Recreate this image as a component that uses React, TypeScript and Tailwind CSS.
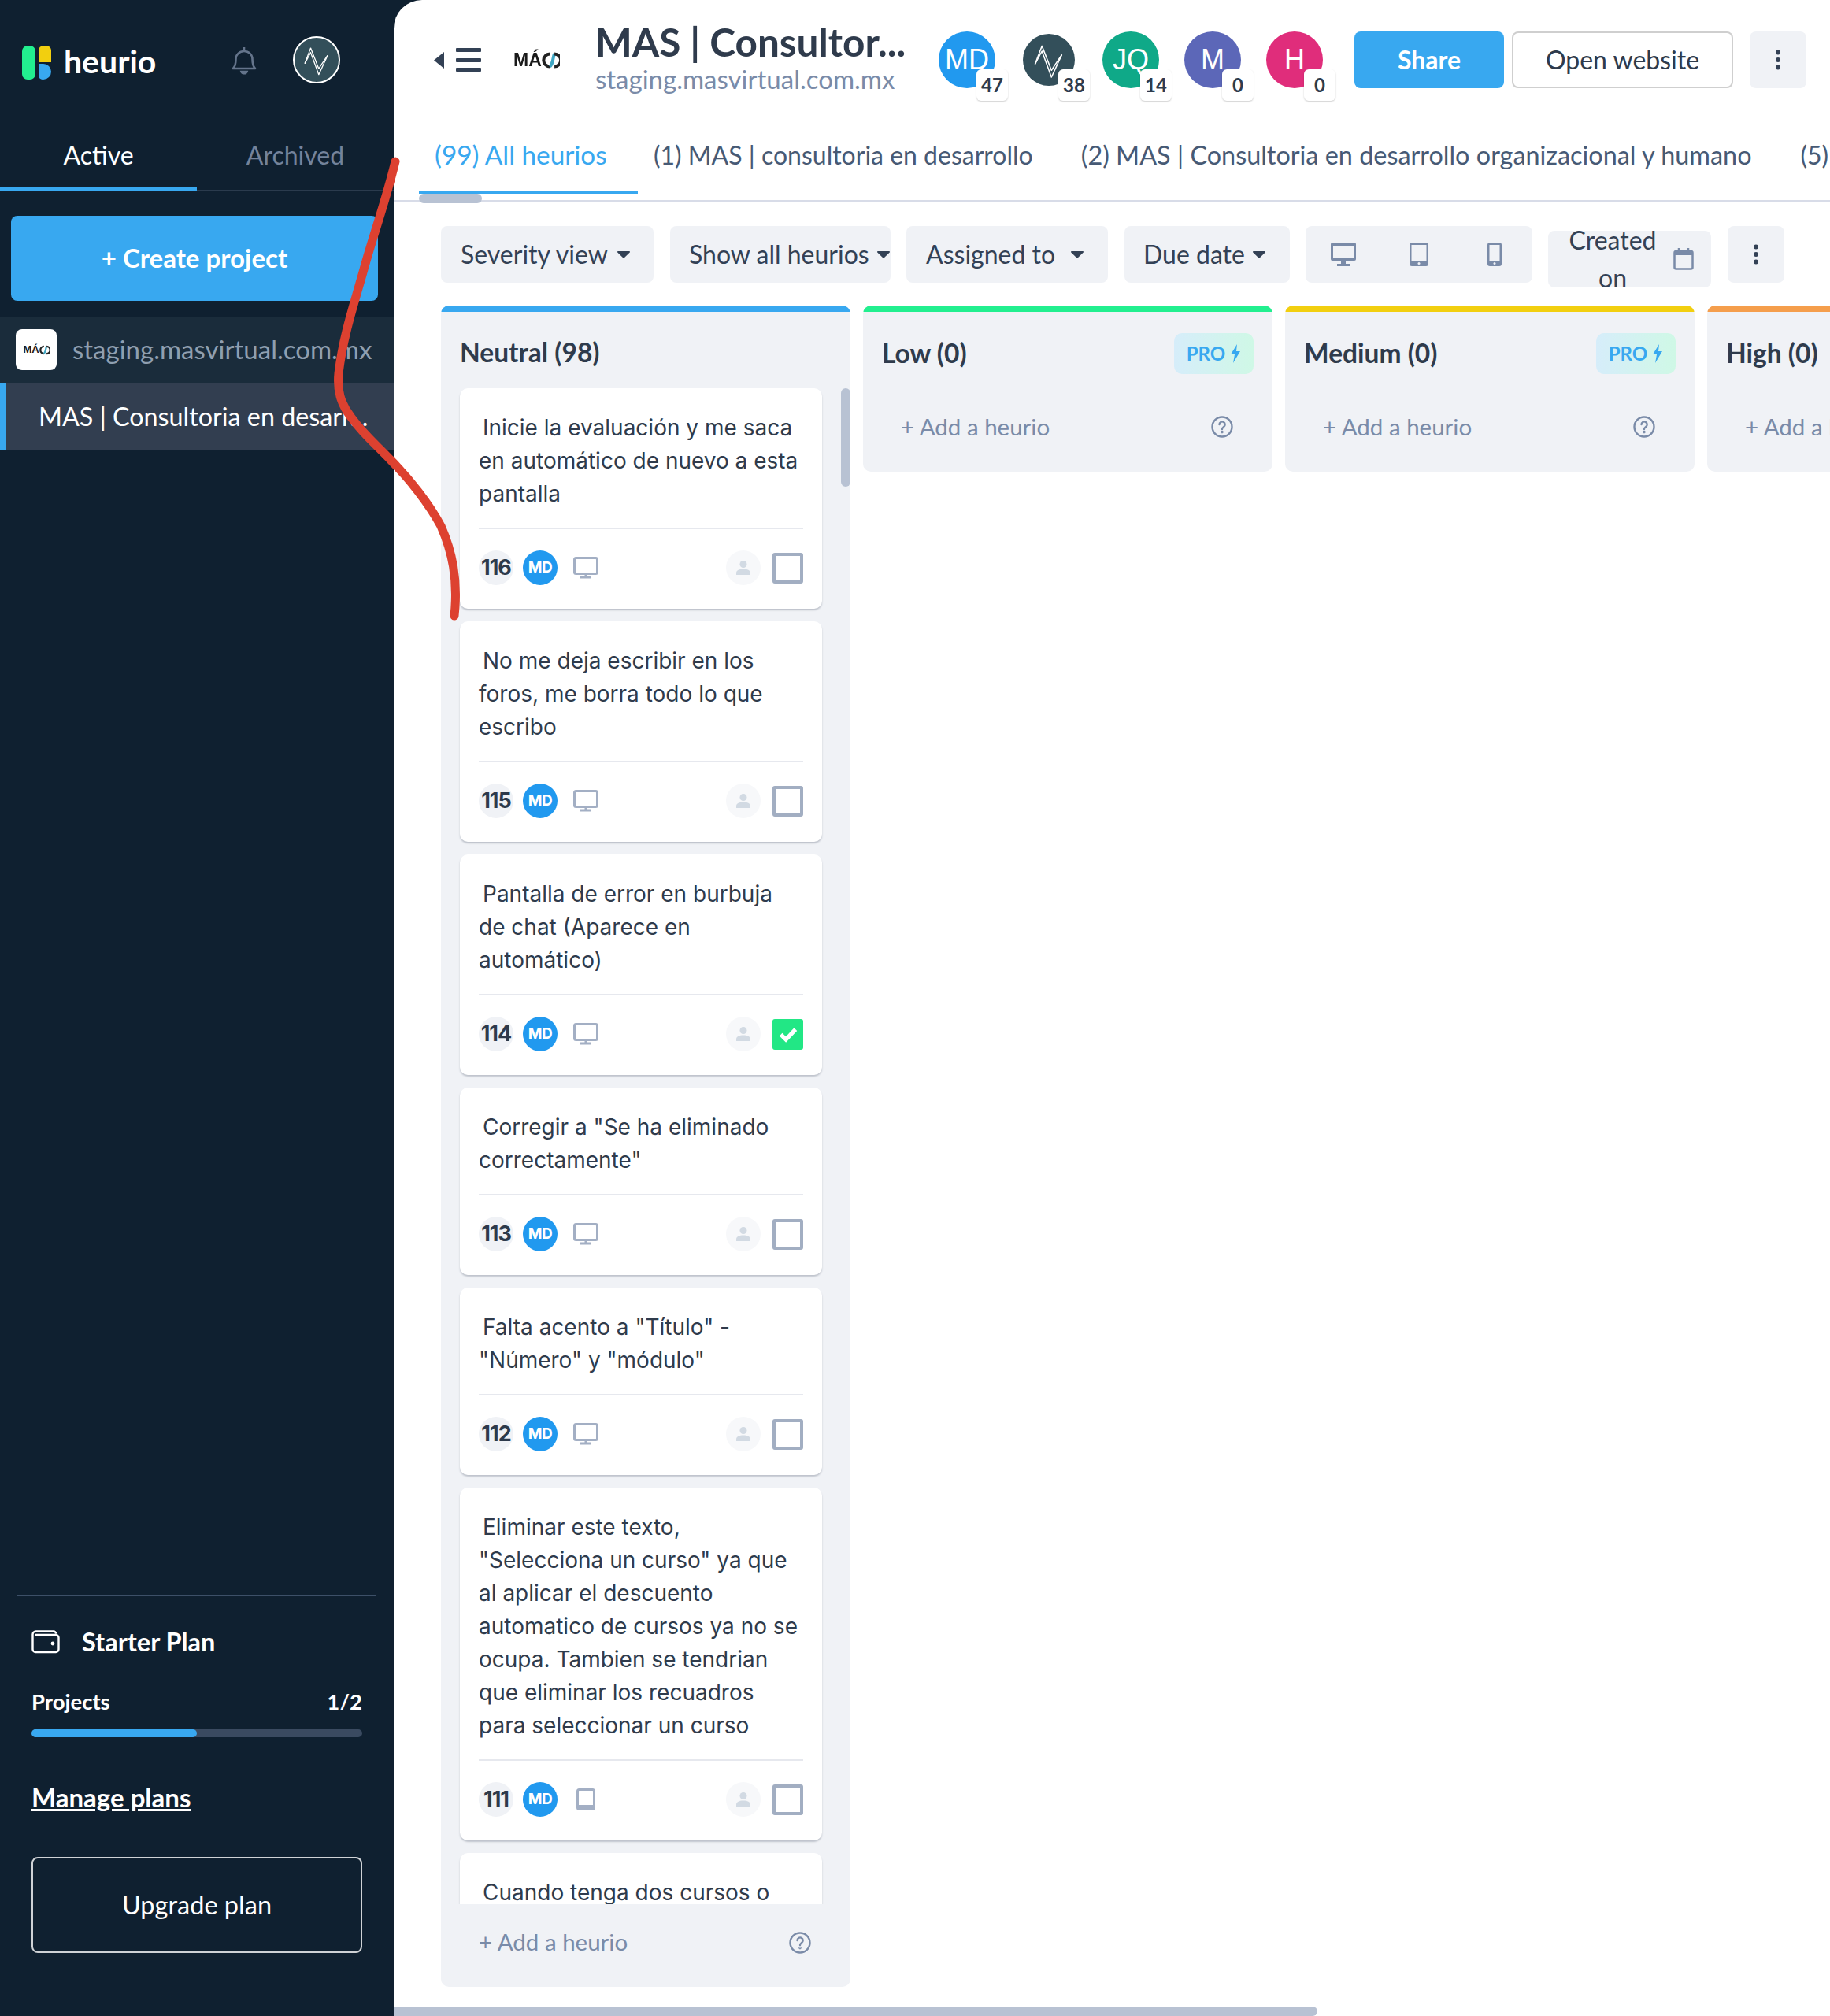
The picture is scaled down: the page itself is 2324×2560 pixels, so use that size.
import { ReactNode } from 'react';

const cards = [
  { id: 116, text: 'Inicie la evaluación y me saca en automático de nuevo a esta pantalla', device: 'desktop', done: false },
  { id: 115, text: 'No me deja escribir en los foros, me borra todo lo que escribo', device: 'desktop', done: false },
  { id: 114, text: 'Pantalla de error en burbuja de chat (Aparece en automático)', device: 'desktop', done: true },
  { id: 113, text: 'Corregir a "Se ha eliminado correctamente"', device: 'desktop', done: false },
  { id: 112, text: 'Falta acento a "Título" - "Número" y "módulo"', device: 'desktop', done: false },
  { id: 111, text: 'Eliminar este texto, "Selecciona un curso" ya que al aplicar el descuento automatico de cursos ya no se ocupa. Tambien se tendrian que eliminar los recuadros para seleccionar un curso', device: 'tablet', done: false },
  { id: 110, text: 'Cuando tenga dos cursos o', device: 'desktop', done: false },
];

const people = [
  { label: 'MD', bg: 'bg-[#2199ef]', count: 47 },
  { label: 'pulse', bg: 'bg-[#334f5a]', count: 38 },
  { label: 'JQ', bg: 'bg-[#0fa988]', count: 14 },
  { label: 'M', bg: 'bg-[#5c67b8]', count: 0 },
  { label: 'H', bg: 'bg-[#e02d7b]', count: 0 },
];

const Pulse = ({ className }: { className: string }) => (
  <svg viewBox="0 0 60 60" className={className} fill="none" stroke="white" strokeWidth="1.4" strokeLinejoin="round">
    <path d="M14 35 L22 14 L33 42 L45 24" />
    <path d="M14 35 L22 20 L33 50 L45 24" />
  </svg>
);

const MasLogo = ({ className }: { className: string }) => (
  <div className={`flex items-center font-['Liberation_Sans',sans-serif] font-bold text-[#1a1a1a] ${className}`}>
    <span>MÁ</span>
    <svg viewBox="0 0 20 20" className="h-[1em] w-[1em]" fill="none" strokeWidth="3.5">
      <path d="M9 3 A7 7 0 0 0 9 17" stroke="#222" />
      <path d="M9 17 C13 13 12 7 14 3" stroke="#3fa7c4" />
      <path d="M14 3 A7 7 0 0 1 14 17" stroke="#222" />
    </svg>
  </div>
);

const Caret = () => (
  <svg viewBox="0 0 16 10" className="h-[10px] w-[16px] shrink-0" fill="#334155"><path d="M1 1h14a1 1 0 0 1 .8 1.5L8.8 9.2a1 1 0 0 1-1.6 0L.2 2.5A1 1 0 0 1 1 1z" /></svg>
);

const Dots = () => (
  <svg viewBox="0 0 8 30" className="h-[26px] w-[8px]" fill="#334155"><circle cx="4" cy="4" r="3.4" /><circle cx="4" cy="15" r="3.4" /><circle cx="4" cy="26" r="3.4" /></svg>
);

const Help = () => (
  <svg viewBox="0 0 28 28" className="h-[28px] w-[28px]" fill="none" stroke="#7a8ba8" strokeWidth="2.4" strokeLinecap="round">
    <circle cx="14" cy="14" r="12.5" />
    <path d="M10.5 11a3.6 3.6 0 1 1 5.6 3c-1.3.9-2.1 1.5-2.1 3" />
    <circle cx="14" cy="20.6" r="0.6" />
  </svg>
);

const DesktopOutline = () => (
  <svg viewBox="0 0 32 28" className="h-[28px] w-[32px]" fill="none" stroke="#a3afc4" strokeWidth="3">
    <rect x="1.5" y="1.5" width="29" height="20" rx="2" />
    <path d="M16 22v4M9 26h14" />
  </svg>
);

const TabletOutline = () => (
  <svg viewBox="0 0 24 28" className="h-[28px] w-[24px]" fill="none" stroke="#a3afc4" strokeWidth="3">
    <rect x="1.5" y="1.5" width="21" height="25" rx="2" />
    <path d="M2 23h20" strokeWidth="4" />
  </svg>
);

const Card = ({ id, text, device, done }: { id: number; text: string; device: string; done: boolean }) => (
  <div className="shrink-0 rounded-[10px] bg-white px-[24px] pt-[29px] pb-[30px] shadow-[0_2px_2px_rgba(80,90,110,0.3)]">
    <p className="font-['Inter',sans-serif] text-[28px] leading-[42px] text-[#2f3b4c]"><span className="inline-block w-[5px]" />{text}</p>
    <div className="mt-[22px] mb-[27px] h-[2px] bg-[#e6e8ee]" />
    <div className="flex items-center">
      <div className="flex h-[44px] w-[44px] items-center justify-center rounded-full bg-[#f0f2f6] font-['Inter',sans-serif] text-[27px] font-bold tracking-[-1px] text-[#2d3a4b]">{id}</div>
      <div className="ml-[12px] flex h-[44px] w-[44px] items-center justify-center rounded-full bg-[#2199ef] font-['Inter',sans-serif] text-[19px] font-bold tracking-[-0.5px] text-white">MD</div>
      <div className="ml-[20px] flex w-[32px] items-center justify-center">{device === 'desktop' ? <DesktopOutline /> : <TabletOutline />}</div>
      <div className="ml-auto flex h-[44px] w-[44px] items-center justify-center rounded-full bg-[#f7f8fa]">
        <svg viewBox="0 0 20 20" className="h-[20px] w-[20px]" fill="#d2dae3"><circle cx="10" cy="5.5" r="4.5" /><path d="M1 19v-2.5C1 13 5 11.5 10 11.5s9 1.500 9 5V19z" /></svg>
      </div>
      {done ? (
        <div className="ml-[15px] flex h-[39px] w-[39px] items-center justify-center rounded-[3px] bg-[#22e785]">
          <svg viewBox="0 0 24 24" className="h-[28px] w-[28px]" fill="none" stroke="white" strokeWidth="4.5"><path d="M4 12.500l5.500 5.500L20 7" /></svg>
        </div>
      ) : (
        <div className="ml-[15px] h-[39px] w-[39px] rounded-[3px] border-[4px] border-[#a2aec2] bg-white" />
      )}
    </div>
  </div>
);

const ToolbarPill = ({ children, className }: { children: ReactNode; className: string }) => (
  <div className={`flex h-[72px] items-center rounded-[8px] bg-[#f0f2f6] text-[#334155] ${className}`}>{children}</div>
);

const ProBadge = () => (
  <div className="flex h-[52px] w-[101px] items-center justify-center gap-[6px] rounded-[10px] bg-gradient-to-r from-[#d6edfa] to-[#cff8e6] text-[24px] font-bold text-[#38a8f0]">
    PRO
    <svg viewBox="0 0 14 24" className="h-[24px] w-[14px]" fill="#38a8f0"><path d="M9 0 1 13h5l-2 11 9-15H8z" /></svg>
  </div>
);

const SideColumn = ({ title, bar, pro }: { title: string; bar: string; pro: boolean }) => (
  <div className="h-[211px] w-[520px] shrink-0 overflow-hidden rounded-[10px] bg-[#f0f2f6]">
    <div className={`h-[8px] ${bar}`} />
    <div className="flex h-[106px] items-center justify-between pr-[24px] pl-[24px]">
      <span className="-mt-[2px] text-[33.500px] font-bold text-[#2f3b4c]">{title}</span>
      {pro && <ProBadge />}
    </div>
    <div className="flex h-[80px] items-center justify-between pr-[50px] pl-[48px]">
      <span className="text-[29.500px] whitespace-nowrap text-[#7a8ba8]">+ Add a heurio</span>
      <Help />
    </div>
  </div>
);

export default function App() {
  return (
    <div className="relative flex h-[2560px] w-[2324px] overflow-hidden bg-[#0f2030] font-['Lato',sans-serif]">
      {/* sidebar */}
      <aside className="flex h-full w-[500px] shrink-0 flex-col text-white">
        <div className="flex h-[152px] items-start pt-[46px]">
          <svg viewBox="0 0 38 43" className="mt-[12px] ml-[28px] h-[43px] w-[38px]">
            <rect x="0" y="0" width="17" height="43" rx="7" fill="#22ef8f" />
            <path d="M21 6a6 6 0 0 1 6-6h4a6 6 0 0 1 6 6v15H21z" fill="#f2cf0f" />
            <path d="M21 23h6a10 10 0 0 1 0 20h-1a5 5 0 0 1-5-5z" fill="#38a8f0" />
          </svg>
          <span className="mt-[6px] ml-[15px] text-[41px] leading-[52px] font-bold">heurio</span>
          <svg viewBox="0 0 32 36" className="mt-[13px] ml-[96px] h-[36px] w-[32px]" fill="none" stroke="#64748b" strokeWidth="2.600">
            <path d="M2 28h28c-3-3-3.500-6-3.500-12 0-5.500-4.500-10-10.500-10S5.500 10.500 5.500 16c0 6-.5 9-3.500 12z" strokeLinejoin="round" />
            <path d="M16 6V1" />
            <path d="M12.500 32c1 3 6 3 7 0z" fill="#64748b" />
          </svg>
          <div className="ml-[46px] flex h-[60px] w-[60px] items-center justify-center rounded-full border-[2px] border-white bg-[#334f5a]">
            <Pulse className="h-[56px] w-[56px]" />
          </div>
        </div>
        <div className="flex h-[91px] border-b-[2px] border-[#2b3b4d] text-[32px]">
          <div className="flex h-[90px] w-1/2 items-center justify-center border-b-[4px] border-[#38a8f0] pt-[4px]">Active</div>
          <div className="flex h-[90px] w-1/2 items-center justify-center text-[#74839b]">Archived</div>
        </div>
        <div className="mt-[31px] ml-[14px] flex h-[108px] w-[466px] items-center justify-center rounded-[8px] bg-[#38a8f0] text-[33px] font-bold">+ Create project</div>
        <div className="mt-[20px] flex h-[84px] items-center bg-[#1a2c3b] pl-[20px]">
          <div className="flex h-[52px] w-[52px] items-center justify-center rounded-[8px] bg-white">
            <MasLogo className="text-[13px]" />
          </div>
          <span className="ml-[20px] text-[33px] whitespace-nowrap text-[#8f9fb0]">staging.masvirtual.com.mx</span>
        </div>
        <div className="flex h-[86px] items-center border-l-[8px] border-[#38a8f0] bg-[#323e50] pl-[41px] text-[32.300px] whitespace-nowrap">MAS | Consultoria en desarr...</div>

        <div className="mt-auto px-[22px]">
          <div className="h-[2px] bg-[#3d5068]" />
        </div>
        <div className="flex flex-col px-[40px] pt-[34px]">
          <div className="flex items-center">
            <svg viewBox="0 0 36 30" className="h-[30px] w-[36px]" fill="none" stroke="white" strokeWidth="2.400">
              <path d="M5 6h26a3.500 3.500 0 0 1 3.500 3.500v15A3.500 3.500 0 0 1 31 28H5a3.500 3.500 0 0 1-3.500-3.500v-19A4 4 0 0 1 5.500 1.500H28a3 3 0 0 1 3 3" />
              <circle cx="27" cy="17" r="1.200" fill="white" />
            </svg>
            <span className="ml-[28px] text-[32.500px] font-bold">Starter Plan</span>
          </div>
          <div className="mt-[30px] flex items-center justify-between text-[27.500px] font-bold">
            <span>Projects</span>
            <span>1/2</span>
          </div>
          <div className="mt-[15px] h-[10px] shrink-0 rounded-full bg-[#3a4a60]">
            <div className="h-full w-1/2 rounded-full bg-[#38a8f0]" />
          </div>
        </div>
        <div className="mt-[56px] px-[40px] text-[33px] leading-[40px] font-bold underline">Manage plans</div>
        <div className="mx-[40px] mt-[56px] mb-[80px] flex h-[122px] items-center justify-center rounded-[8px] border-[2px] border-[#cfd2d6] text-[32.500px]">Upgrade plan</div>
      </aside>

      {/* main */}
      <main className="relative flex h-full min-w-0 flex-1 flex-col overflow-hidden rounded-tl-[36px] bg-white">
        <header className="flex h-[152px] shrink-0 items-start pt-[40px] pl-[51px]">
          <div className="flex h-[72px] items-center">
            <svg viewBox="0 0 13 21" className="h-[21px] w-[13px]" fill="#334155"><path d="M13 0v21L0 10.500z" /></svg>
            <div className="ml-[15px] flex h-[30px] w-[32px] flex-col justify-between">
              <div className="h-[5px] rounded-[1px] bg-[#334155]" />
              <div className="h-[5px] rounded-[1px] bg-[#334155]" />
              <div className="h-[5px] rounded-[1px] bg-[#334155]" />
            </div>
            <MasLogo className="ml-[41px] w-[63px] text-[23px] blur-[0.5px]" />
          </div>
          <div className="ml-[41px] -mt-[16px] w-[400px]">
            <div className="text-[49.500px] leading-[58px] font-bold whitespace-nowrap text-[#2f3b4c]">MAS | Consultor...</div>
            <div className="mt-[-4px] text-[33px] leading-[44px] whitespace-nowrap text-[#7a8ba8]">staging.masvirtual.com.mx</div>
          </div>
          <div className="ml-[36px] flex gap-[32px]">
            {people.map(p => (
              <div key={p.label} className="relative flex h-[72px] w-[72px] items-center justify-center">
                <div className={`flex items-center justify-center rounded-full font-['Liberation_Sans',sans-serif] text-[36px] text-white ${p.bg} ${p.label === 'pulse' ? 'h-[66px] w-[66px]' : 'h-[72px] w-[72px]'}`}>
                  {p.label === 'pulse' ? <Pulse className="h-[66px] w-[66px]" /> : p.label}
                </div>
                <div className="absolute top-[48px] left-[48px] flex h-[40px] w-[40px] items-center justify-center rounded-[6px] bg-white text-[24px] font-bold text-[#2f3b4c] shadow-[0_1px_2px_rgba(0,0,0,0.2)]">{p.count}</div>
              </div>
            ))}
          </div>
          <div className="ml-[40px] flex h-[72px] w-[190px] items-center justify-center rounded-[8px] bg-[#38a8f0] text-[32px] font-bold text-white">Share</div>
          <div className="ml-[10px] flex h-[72px] w-[281px] items-center justify-center rounded-[8px] border-[2px] border-[#cfcfcf] text-[32px] text-[#2f3b4c]">Open website</div>
          <div className="ml-[21px] flex h-[72px] w-[72px] items-center justify-center rounded-[8px] bg-[#f0f2f6]"><Dots /></div>
        </header>

        <div className="relative flex h-[104px] shrink-0 border-b-[2px] border-[#d8dce8] pl-[32px] text-[32px] whitespace-nowrap text-[#475a75]">
          <div className="flex h-[94px] w-[278px] shrink-0 items-center border-b-[4px] border-[#38a8f0] pl-[20px] text-[33.300px] text-[#38a8f0]">(99) All heurios</div>
          <div className="ml-[20px] flex h-[90px] shrink-0 items-center">(1) MAS | consultoria en desarrollo</div>
          <div className="ml-[61px] flex h-[90px] shrink-0 items-center text-[32.400px]">(2) MAS | Consultoria en desarrollo organizacional y humano</div>
          <div className="ml-[62px] flex h-[90px] shrink-0 items-center">(5) MAS | Consultoria</div>
          <div className="absolute top-[94px] left-[32px] h-[12px] w-[80px] rounded-full bg-[#b8c2d3]" />
        </div>

        <div className="flex shrink-0 items-start pt-[31px] pl-[60px] text-[32px] whitespace-nowrap">
          <ToolbarPill className="w-[270px] gap-[12px] pl-[25px]">Severity view <Caret /></ToolbarPill>
          <ToolbarPill className="ml-[21px] w-[280px] gap-[10px] pl-[24px]">Show all heurios <Caret /></ToolbarPill>
          <ToolbarPill className="ml-[20px] w-[256px] gap-[20px] pl-[25px]">Assigned to <Caret /></ToolbarPill>
          <ToolbarPill className="ml-[21px] w-[210px] gap-[10px] pl-[24px]">Due date <Caret /></ToolbarPill>
          <ToolbarPill className="ml-[20px] grid w-[288px] grid-cols-3 justify-items-center">
            <svg viewBox="0 0 32 30" className="h-[30px] w-[32px]"><rect x="0" y="0" width="32" height="23" rx="2" fill="#7a8ba8" /><rect x="3" y="5" width="26" height="15" fill="#f0f2f6" /><path d="M13 23h6v4h5v3H8v-3h5z" fill="#7a8ba8" /></svg>
            <svg viewBox="0 0 24 30" className="h-[30px] w-[24px]"><rect x="0" y="0" width="24" height="30" rx="3" fill="#7a8ba8" /><rect x="2.500" y="3" width="19" height="20" fill="#f0f2f6" /><circle cx="12" cy="26.500" r="1.500" fill="#f0f2f6" /></svg>
            <svg viewBox="0 0 18 30" className="h-[30px] w-[18px]"><rect x="0" y="0" width="18" height="30" rx="3" fill="#7a8ba8" /><rect x="2.500" y="3" width="13" height="20" fill="#f0f2f6" /><circle cx="9" cy="26.500" r="1.500" fill="#f0f2f6" /></svg>
          </ToolbarPill>
          <div className="mt-[6px] ml-[20px] flex h-[72px] w-[207px] items-center justify-between rounded-[8px] bg-[#f0f2f6] pr-[22px] pl-[24px] text-[#334155]">
            <div className="w-[116px] text-center leading-[48px] whitespace-normal">Created on</div>
            <svg viewBox="0 0 26 28" className="h-[28px] w-[26px]" fill="none" stroke="#7a8ba8" strokeWidth="2.500"><rect x="1.500" y="4" width="23" height="22.500" rx="2" /><path d="M1.500 7h23" strokeWidth="4" /><path d="M7 0v5M19 0v5" /></svg>
          </div>
          <ToolbarPill className="ml-[21px] w-[72px] justify-center"><Dots /></ToolbarPill>
        </div>

        <div className="mt-[23px] flex min-h-0 flex-1 items-start gap-[16px] pl-[60px]">
          <div className="flex h-[2135px] w-[520px] shrink-0 flex-col overflow-hidden rounded-[10px] bg-[#f0f2f6]">
            <div className="h-[8px] shrink-0 bg-[#38a8f0]" />
            <div className="flex h-[97px] shrink-0 items-center pt-[5px] pl-[24px] text-[33.500px] font-bold text-[#2f3b4c]">Neutral (98)</div>
            <div className="relative min-h-0 flex-1 overflow-hidden">
              <div className="flex flex-col gap-[16px] pr-[36px] pl-[24px]">
                {cards.map(c => <Card key={c.id} {...c} />)}
              </div>
              <div className="absolute top-0 right-0 h-[125px] w-[12px] rounded-full bg-[#b8c2d3]" />
            </div>
            <div className="flex h-[105px] shrink-0 items-center justify-between pr-[50px] pb-[8px] pl-[48px]">
              <span className="text-[29.500px] text-[#7a8ba8]">+ Add a heurio</span>
              <Help />
            </div>
          </div>
          <SideColumn title="Low (0)" bar="bg-[#22ef8f]" pro />
          <SideColumn title="Medium (0)" bar="bg-[#f2cf0f]" pro />
          <SideColumn title="High (0)" bar="bg-[#f59e4c]" pro />
        </div>

        <div className="absolute bottom-0 left-0 h-[12px] w-[1173px] rounded-r-full bg-[#b8c2d3]" />
      </main>

      {/* hand-drawn annotation over the page */}
      <svg viewBox="0 0 2324 2560" className="pointer-events-none absolute inset-0 h-[2560px] w-[2324px]" fill="none">
        <path d="M502 205 C490 255 475 295 462 342 C450 385 436 425 430 474 C428 495 432 512 446 530 C462 552 478 565 495 583 C520 608 545 640 560 668 C574 700 582 735 577 782" stroke="#dd4130" strokeWidth="11" strokeLinecap="round" strokeLinejoin="round" />
      </svg>
    </div>
  );
}
